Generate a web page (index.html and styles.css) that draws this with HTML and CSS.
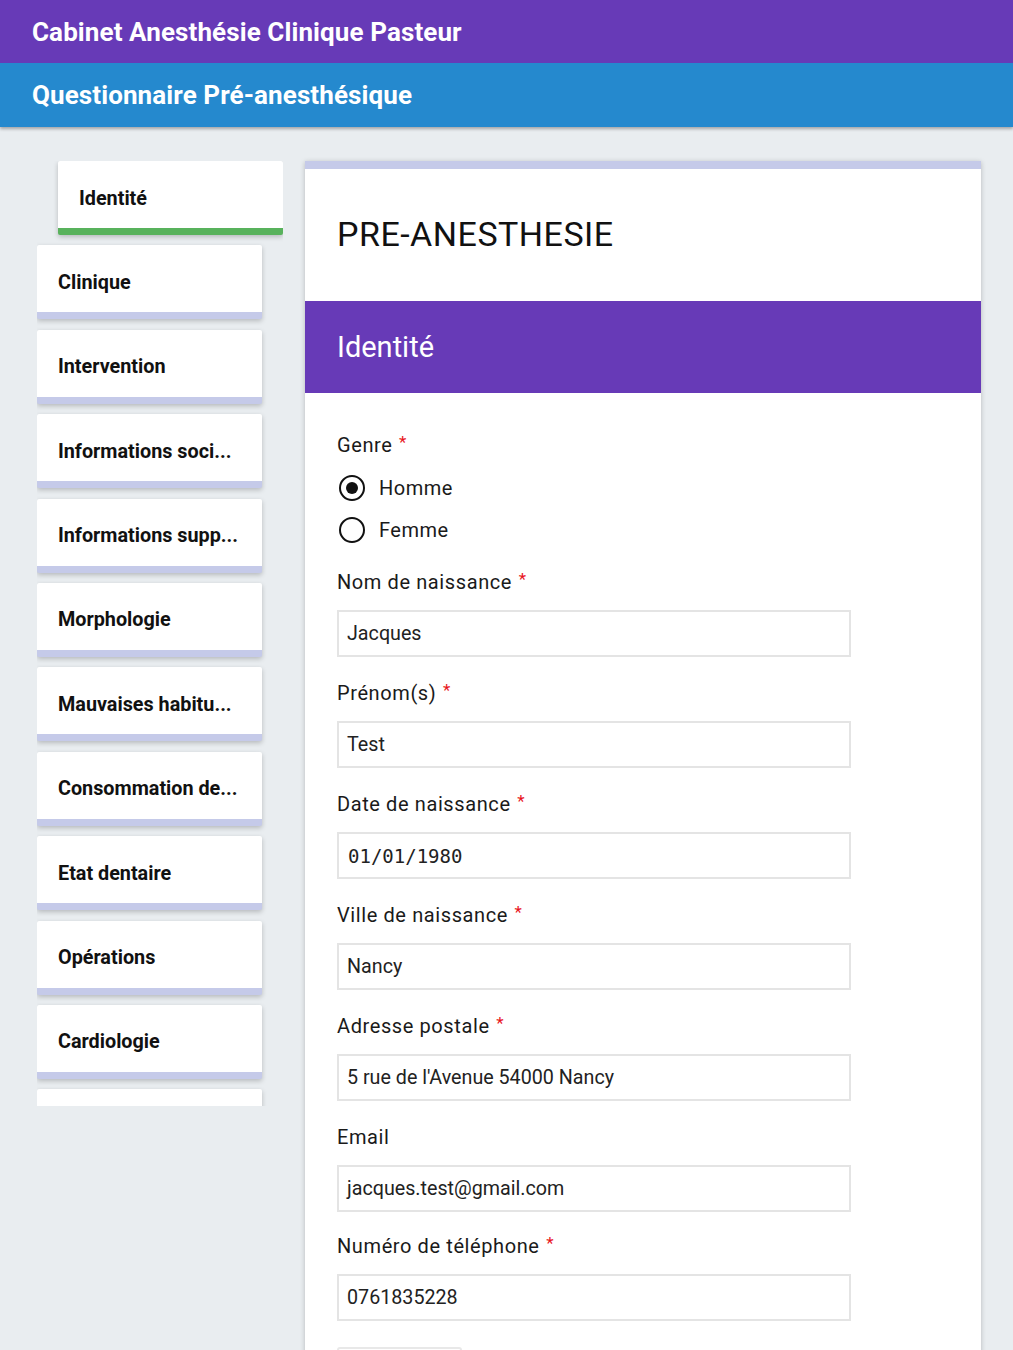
FILE: index.html
```html
<!DOCTYPE html>
<html lang="fr">
<head>
<meta charset="utf-8">
<title>Questionnaire Pré-anesthésique</title>
<link rel="stylesheet" href="styles.css">
</head>
<body>
<header class="top">
  <div class="top-brand">Cabinet Anesthésie Clinique Pasteur</div>
  <div class="top-sub">Questionnaire Pré-anesthésique</div>
</header>
<div class="layout">
  <nav class="sidebar">
    <div class="tab active">Identité</div>
    <div class="tab">Clinique</div>
    <div class="tab">Intervention</div>
    <div class="tab">Informations soci...</div>
    <div class="tab">Informations supp...</div>
    <div class="tab">Morphologie</div>
    <div class="tab">Mauvaises habitu...</div>
    <div class="tab">Consommation de...</div>
    <div class="tab">Etat dentaire</div>
    <div class="tab">Opérations</div>
    <div class="tab">Cardiologie</div>
    <div class="tab"></div>
  </nav>
  <main class="card">
    <h1 class="card-title">PRE-ANESTHESIE</h1>
    <h2 class="section-title">Identité</h2>
    <form class="form">
      <div class="field">
        <div class="label">Genre <span class="req">*</span></div>
        <div class="radios">
          <div class="radio-row"><span class="radio checked"></span><span>Homme</span></div>
          <div class="radio-row"><span class="radio"></span><span>Femme</span></div>
        </div>
      </div>
      <div class="field">
        <div class="label">Nom de naissance <span class="req">*</span></div>
        <div class="input">Jacques</div>
      </div>
      <div class="field">
        <div class="label">Prénom(s) <span class="req">*</span></div>
        <div class="input">Test</div>
      </div>
      <div class="field">
        <div class="label">Date de naissance <span class="req">*</span></div>
        <div class="input mono">01/01/1980</div>
      </div>
      <div class="field">
        <div class="label">Ville de naissance <span class="req">*</span></div>
        <div class="input">Nancy</div>
      </div>
      <div class="field">
        <div class="label">Adresse postale <span class="req">*</span></div>
        <div class="input">5 rue de l'Avenue 54000 Nancy</div>
      </div>
      <div class="field">
        <div class="label">Email</div>
        <div class="input">jacques.test@gmail.com</div>
      </div>
      <div class="field field-tight">
        <div class="label">Numéro de téléphone <span class="req">*</span></div>
        <div class="input">0761835228</div>
      </div>
      <div class="next-box"></div>
    </form>
  </main>
</div>
</body>
</html>
```
FILE: styles.css
```css
* { box-sizing: border-box; }
html, body { margin: 0; padding: 0; }
body {
  background: #e9edf0;
  font-family: Roboto, "Noto Sans", "Liberation Sans", sans-serif;
  color: #1a1a1a;
}
.top { position: relative; z-index: 2; box-shadow: 0 2px 3px rgba(0,0,0,0.3); }
.top-brand, .top-sub {
  color: #fff;
  font-weight: 700;
  font-size: 26px;
  letter-spacing: 0.1px;
  padding-left: 32px;
  display: flex;
  align-items: center;
}
.top-brand { background: #673ab7; height: 63px; }
.top-sub { background: #2589ce; height: 64px; }

.layout {
  display: flex;
  align-items: flex-start;
  padding: 34px 0 0 37px;
  gap: 22px;
}
.sidebar {
  width: 246px;
  flex: none;
  height: 945px;
  overflow: hidden;
}
.tab {
  width: 225px;
  height: 74px;
  margin-bottom: 10.4px;
  background: #fff;
  border-bottom: 7px solid #c5cae9;
  border-radius: 2px;
  box-shadow: 0 2px 5px rgba(0,0,0,0.22);
  font-weight: 700;
  font-size: 19.8px;
  color: #111;
  padding-left: 21px;
  padding-top: 7px;
  display: flex;
  align-items: center;
}
.tab.active {
  margin-left: 21px;
  border-bottom-color: #58b25c;
}
.card {
  width: 676px;
  flex: none;
  background: #fff;
  border-top: 8px solid #c5cae9;
  box-shadow: 0 1px 5px rgba(0,0,0,0.22);
  min-height: 1300px;
}
.card-title {
  margin: 0;
  height: 132px;
  display: flex;
  align-items: center;
  padding-left: 32px;
  padding-bottom: 2px;
  font-weight: 400;
  font-size: 34px;
  letter-spacing: 0.5px;
  color: #111;
}
.section-title {
  margin: 0;
  height: 92px;
  background: #673ab7;
  color: #fff;
  font-weight: 400;
  font-size: 29px;
  display: flex;
  align-items: center;
  padding-left: 32px;
}
.form {
  padding: 40px 32px 0 32px;
  display: flex;
  flex-direction: column;
  gap: 24px;
}
.field-tight { margin-top: -2px; }
.label {
  font-size: 20px;
  line-height: 24px;
  letter-spacing: 0.6px;
  color: #1a1a1a;
  margin-bottom: 16px;
}
.req {
  color: #e8141c;
  font-size: 17px;
  line-height: 0;
  vertical-align: 4px;
  margin-left: 1px;
}
.radios { margin-top: -6px; margin-bottom: -5px; display: flex; flex-direction: column; }
.radio-row {
  height: 42px;
  display: flex;
  align-items: center;
  gap: 14px;
  font-size: 20px;
  letter-spacing: 0.5px;
  padding-left: 2px;
}
.radio {
  width: 26px;
  height: 26px;
  border: 2.5px solid #111;
  border-radius: 50%;
  display: flex;
  align-items: center;
  justify-content: center;
}
.radio.checked::after {
  content: "";
  width: 12px;
  height: 12px;
  border-radius: 50%;
  background: #111;
}
.input {
  width: 514px;
  height: 47px;
  border: 2px solid #e4e4e4;
  padding-left: 8px;
  display: flex;
  align-items: center;
  font-size: 19.7px;
  color: #222;
}
.input.mono {
  font-family: "DejaVu Sans Mono", "Liberation Mono", monospace;
  font-size: 19px;
  padding-left: 9px;
}
.next-box {
  width: 125px;
  height: 40px;
  border: 2px solid #e8e8e8;
  border-radius: 3px;
  margin-top: 2px;
}
```
